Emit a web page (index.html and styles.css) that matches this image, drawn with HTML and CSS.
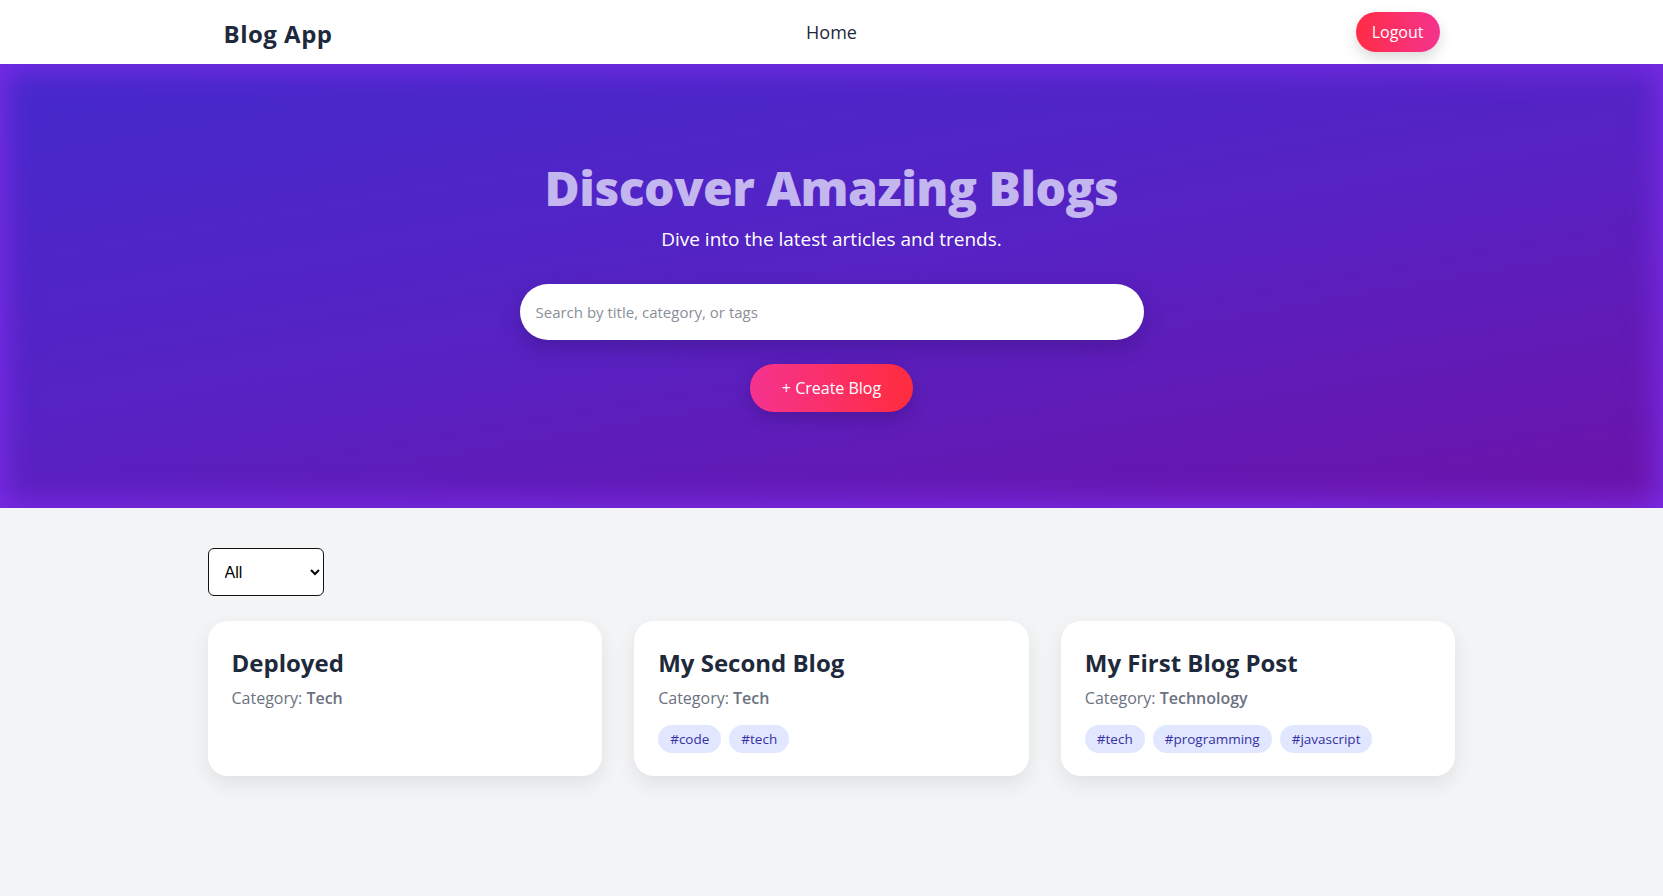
FILE: index.html
```html
<!DOCTYPE html>
<html lang="en">
<head>
<meta charset="utf-8">
<title>Blog App</title>
<link rel="stylesheet" href="styles.css">
</head>
<body>
<nav class="navbar">
  <div class="nav-inner">
    <a class="brand" href="#">Blog App</a>
    <a class="nav-link" href="#">Home</a>
    <button class="logout">Logout</button>
  </div>
</nav>
<header class="hero">
  <h1 class="hero-title">Discover Amazing Blogs</h1>
  <p class="hero-sub">Dive into the latest articles and trends.</p>
  <input class="search" type="text" placeholder="Search by title, category, or tags">
  <button class="create">+ Create Blog</button>
</header>
<main class="content">
  <select class="filter">
    <option>All</option>
    <option>Tech</option>
    <option>Technology</option>
  </select>
  <div class="grid">
    <article class="card">
      <h2 class="card-title">Deployed</h2>
      <p class="card-cat">Category: <strong>Tech</strong></p>
    </article>
    <article class="card">
      <h2 class="card-title">My Second Blog</h2>
      <p class="card-cat">Category: <strong>Tech</strong></p>
      <div class="tags"><span class="tag">#code</span><span class="tag">#tech</span></div>
    </article>
    <article class="card">
      <h2 class="card-title">My First Blog Post</h2>
      <p class="card-cat">Category: <strong>Technology</strong></p>
      <div class="tags"><span class="tag">#tech</span><span class="tag">#programming</span><span class="tag">#javascript</span></div>
    </article>
  </div>
</main>
</body>
</html>
```
FILE: styles.css
```css
* { box-sizing: border-box; }
html, body { margin: 0; padding: 0; }
body {
  font-family: "Open Sans", "Noto Sans", sans-serif;
  background: #f3f4f6;
  color: #1e293b;
  min-height: 896px;
}
.navbar {
  background: #fff;
  height: 64px;
}
.nav-inner {
  max-width: 1280px;
  margin: 0 auto;
  padding: 0 32px;
  height: 64px;
  display: grid;
  grid-template-columns: 1fr auto 1fr;
  align-items: center;
}
.brand {
  justify-self: start;
  font-size: 24px;
  font-weight: 700;
  color: #1e293b;
  text-decoration: none;
  letter-spacing: 0.5px;
  margin-top: 2px;
}
.nav-link {
  font-size: 18px;
  font-weight: 500;
  color: #1e293b;
  text-decoration: none;
}
.logout {
  justify-self: end;
  font-family: inherit;
  font-size: 16px;
  color: #fff;
  border: none;
  border-radius: 999px;
  padding: 0 16px;
  height: 40px;
  background: linear-gradient(90deg, #ff2c44, #f5338f);
  box-shadow: 0 6px 14px rgba(0,0,0,0.15);
  cursor: pointer;
}
.hero {
  height: 444px;
  background: linear-gradient(170deg, #4429cb 0%, #5722c3 50%, #6c13a8 100%);
  box-shadow: inset 0 0 30px 6px #7a2be6;
  display: flex;
  flex-direction: column;
  align-items: center;
  padding-top: 95px;
}
.hero-title {
  margin: 0;
  font-size: 48px;
  font-weight: 800;
  color: #c4b6ee;
  line-height: 1.2;
  letter-spacing: -0.5px;
}
.hero-sub {
  margin: 9px 0 0;
  font-size: 19px;
  color: #fff;
}
.search {
  margin-top: 32px;
  width: 624px;
  height: 56px;
  border: none;
  border-radius: 999px;
  padding: 0 16px;
  font-family: inherit;
  font-size: 15px;
  color: #333;
  background: #fff;
  box-shadow: 0 8px 20px rgba(40,10,90,0.3);
  outline: none;
}
.search::placeholder { color: #8a8f99; }
.create {
  margin-top: 24px;
  height: 48px;
  padding: 0 32px;
  border: none;
  border-radius: 999px;
  font-family: inherit;
  font-size: 16px;
  color: #fff;
  background: linear-gradient(90deg, #f5338f, #ff2c3e);
  box-shadow: 0 6px 16px rgba(40,10,90,0.3);
  cursor: pointer;
}
.content {
  max-width: 1280px;
  margin: 0 auto;
  padding: 40px 16px;
}
.filter {
  width: 116px;
  height: 48px;
  padding: 0 12px;
  font-family: "Liberation Sans", Arial, sans-serif;
  font-size: 16px;
  color: #000;
  border: 1px solid #111;
  border-radius: 6px;
  background: #fff;
}
.grid {
  margin-top: 25px;
  display: grid;
  grid-template-columns: repeat(3, 1fr);
  gap: 32px;
}
.card {
  background: #fff;
  border-radius: 20px;
  padding: 26px 24px 24px;
  height: 155px;
  box-shadow: 0 8px 20px rgba(0,0,0,0.08);
}
.card-title {
  margin: 0;
  font-size: 24px;
  font-weight: 700;
  color: #1e293b;
  line-height: 32px;
}
.card-cat {
  margin: 8px 0 0;
  font-size: 16px;
  color: #6b7280;
}
.card-cat strong { font-weight: 600; color: #6b7280; }
.tags {
  margin-top: 16px;
  display: flex;
  gap: 8px;
}
.tag {
  background: #e0e7ff;
  color: #3730a3;
  font-size: 13.5px;
  height: 28px;
  line-height: 28px;
  padding: 0 12px;
  border-radius: 999px;
}
```
